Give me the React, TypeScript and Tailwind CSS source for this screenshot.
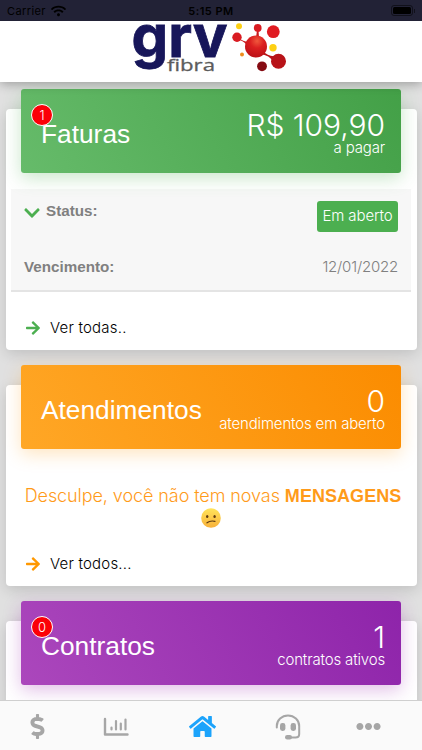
import type { ReactNode } from "react";
import {
  FaArrowRight,
  FaChevronDown,
  FaDollarSign,
  FaEllipsisH,
  FaHome,
  FaWifi,
} from "react-icons/fa";

function StatusBar() {
  return (
    <div className="flex h-[21px] items-center justify-between bg-[#222236] px-[7px] font-['Inter'] text-[11px] leading-3 text-black">
      <span className="flex w-[120px] items-center gap-[5px] tracking-[0.4px]">
        Carrier
        <FaWifi className="h-[12px] w-[15px]" />
      </span>
      <span className="font-semibold tracking-[0.5px]">5:15 PM</span>
      <span className="flex w-[120px] items-center justify-end gap-px">
        <span className="h-[11px] w-[22px] rounded-[3px] border border-black/50 p-px">
          <span className="block h-full rounded-[1.5px] bg-black" />
        </span>
        <span className="h-[4px] w-px bg-black/50" />
      </span>
    </div>
  );
}

function Logo() {
  return (
    <svg className="overflow-visible" width="160" height="56" viewBox="130 20 160 56">
      <defs>
        <radialGradient id="ball" cx="0.55" cy="0.25" r="0.8">
          <stop offset="0" stopColor="#f0583c" />
          <stop offset="0.4" stopColor="#db1f20" />
          <stop offset="1" stopColor="#b80f16" />
        </radialGradient>
      </defs>
      <text
        x="131.500"
        y="57"
        fontFamily="Inter"
        fontWeight="700"
        fontSize="58"
        stroke="#17165a"
        strokeWidth="0.8"
        textLength="96"
        lengthAdjust="spacingAndGlyphs"
        fill="#17165a"
      >
        grv
      </text>
      <text
        x="167"
        y="71"
        fontFamily="Open Sans"
        fontWeight="500"
        fontSize="16"
        stroke="#5b5b5b"
        strokeWidth="0.3"
        textLength="48"
        lengthAdjust="spacingAndGlyphs"
        fill="#5b5b5b"
      >
        fibra
      </text>
      <path d="M237 37 Q243 42 250 42 L248 46 Q243 40 236 39Z" fill="#c9191d" />
      <path d="M257 30 L258.500 30 L259 38 L256 38Z" fill="#c9191d" />
      <path d="M263 51 Q268 57 276 56 L273 62 Q270 55 260 54Z" fill="#b81318" />
      <circle cx="237" cy="37.300" r="4.700" fill="#d91c22" />
      <circle cx="257.700" cy="28" r="3.900" fill="#d91c22" />
      <circle cx="273.300" cy="31.700" r="6.400" fill="#e01b22" />
      <circle cx="256" cy="46.500" r="11" fill="url(#ball)" />
      <circle cx="278.500" cy="61.200" r="7.500" fill="#b81318" />
      <circle cx="262" cy="66.300" r="4.900" fill="#850b12" />
      <circle cx="239" cy="26.200" r="3" fill="#fdd013" />
      <circle cx="273" cy="47.800" r="3.700" fill="#fdd013" />
      <circle cx="242" cy="54.500" r="2" fill="#ee8d1d" />
    </svg>
  );
}

function Sad() {
  return (
    <svg className="mx-auto" width="20" height="20" viewBox="0 0 20 20">
      <defs>
        <linearGradient id="face" x1="0" y1="0" x2="0" y2="1">
          <stop offset="0" stopColor="#ffe45b" />
          <stop offset="1" stopColor="#f8b13a" />
        </linearGradient>
      </defs>
      <circle cx="10" cy="10" r="9.800" fill="url(#face)" />
      <ellipse cx="6.200" cy="8.600" rx="1.200" ry="1.500" fill="#5f3a12" />
      <ellipse cx="13.600" cy="8.600" rx="1.200" ry="1.500" fill="#5f3a12" />
      <path d="M6 14.800 Q9 12.300 14 13.300" fill="none" stroke="#5f3a12" strokeWidth="1.200" strokeLinecap="round" />
    </svg>
  );
}

function Chart() {
  return (
    <svg width="26" height="20" viewBox="0 0 26 20" fill="none" stroke="#a6a6a6" strokeLinecap="round">
      <path d="M2 2 V17.500 H24.500" strokeWidth="2.400" strokeLinejoin="round" />
      <path d="M8.500 10.500 V12.500 M13 4 V12.500 M17.800 6.500 V12.500 M22.500 2.500 V12.500" strokeWidth="2.200" />
    </svg>
  );
}

function Headset() {
  return (
    <svg width="26" height="26" viewBox="0 0 26 26" fill="#a6a6a6">
      <path
        d="M1.800 13.500 V12 A11.200 10.600 0 0 1 24.200 12 V20 Q24.200 23.500 20.500 23.500 H15"
        fill="none"
        stroke="#a6a6a6"
        strokeWidth="2"
        strokeLinecap="round"
      />
      <rect x="5" y="9" width="5.400" height="8" rx="2.400" />
      <rect x="15.600" y="9" width="5.400" height="8" rx="2.400" />
      <rect x="10" y="21" width="7" height="4.500" rx="2.200" />
    </svg>
  );
}

type CardProps = {
  title: string;
  value: string;
  label: string;
  color: string;
  badge?: string;
  className: string;
  children?: ReactNode;
};

function Card({ title, value, label, color, badge, className, children }: CardProps) {
  return (
    <section
      className={`mx-[5.5px] flow-root rounded-[4px] bg-white px-[5.5px] shadow-[0_4px_14px_rgba(0,0,0,0.14)] ${className}`}
    >
      <div className={`relative mx-[10px] -mt-5 flex h-[84px] justify-between rounded-[3px] pr-4 pl-5 ${color}`}>
        <h2 className="pt-[30px] text-[26.3px] leading-[30px]">{title}</h2>
        <div className="flex flex-col items-end pt-[22px] font-['Inter'] font-light">
          <span className="text-[30px] leading-[28px] tracking-[-0.05px]">{value}</span>
          <span className="text-[15px] leading-[17px] tracking-[-0.16px]">{label}</span>
        </div>
        {badge && (
          <span className="absolute top-[15px] left-[10px] flex size-[22px] items-center justify-center rounded-full border border-white bg-[#fb0007] font-['Inter'] text-[13px] leading-none font-light">
            {badge}
          </span>
        )}
      </div>
      {children}
    </section>
  );
}

function SeeAll({ text, color }: { text: string; color: string }) {
  return (
    <a className="flex h-5 items-center gap-[9px] pl-[14px] font-['Inter'] text-[15px] font-light tracking-[0.2px] text-black">
      <FaArrowRight className={`size-4 ${color}`} />
      <span>{text}</span>
    </a>
  );
}

export default function App() {
  return (
    <div className="flex h-[750px] w-[422px] flex-col overflow-hidden bg-[#e0e0e0] font-['Liberation_Sans',sans-serif] text-white">
      <header className="relative z-10 shrink-0 bg-white shadow-[0_2px_10px_rgba(0,0,0,0.3)]">
        <StatusBar />
        <div className="-mt-px flex h-[62px] pl-[130px]">
          <Logo />
        </div>
      </header>

      <main className="min-h-0 flex-1 overflow-hidden pt-[27px]">
        <Card
          title="Faturas"
          value="R$ 109,90"
          label="a pagar"
          badge="1"
          className="h-[241px]"
          color="bg-linear-[60deg,#66bb6a,#43a047] shadow-[0_5px_18px_rgba(76,175,80,0.3)]"
        >
          <div className="mt-4 h-[103px] border-b-2 border-[#e4e4e4] bg-[#f7f7f7] px-[13px] pt-3 text-[15.2px] text-[#808080]">
            <div className="flex h-[31px] justify-between">
              <div className="flex h-[21px] items-center gap-[4px] font-bold">
                <FaChevronDown className="mt-[2px] -ml-px mr-px size-[18px] text-[#4caf50]" />
                Status:
              </div>
              <span className="flex w-[81px] items-center justify-center rounded-[3px] bg-[#4caf50] font-['Inter'] text-[15px] font-light tracking-[-0.1px] text-white">
                Em aberto
              </span>
            </div>
            <div className="mt-[26px] flex h-[18px] items-center justify-between">
              <b>Vencimento:</b>
              <span className="font-['Inter'] text-[15px] font-light tracking-[-0.2px]">12/01/2022</span>
            </div>
          </div>
          <div className="mt-[26px]">
            <SeeAll text="Ver todas.." color="text-[#4caf50]" />
          </div>
        </Card>

        <Card
          title="Atendimentos"
          value="0"
          label="atendimentos em aberto"
          className="mt-[35px] h-[201px]"
          color="bg-linear-[60deg,#ffa726,#fb8c00] shadow-[0_5px_18px_rgba(255,152,0,0.25)]"
        >
          <p className="mt-[35px] pl-1 text-center font-['Inter'] text-[18px] leading-6 font-light tracking-[-0.08px] whitespace-nowrap text-[#ff9b1a]">
            Desculpe, você não tem novas{" "}
            <b className="font-['Liberation_Sans'] font-bold tracking-[0.05px]">MENSAGENS</b>
          </p>
          <Sad />
          <div className="mt-[26px]">
            <SeeAll text="Ver todos..." color="text-[#ff9800]" />
          </div>
        </Card>

        <Card
          title="Contratos"
          value="1"
          label="contratos ativos"
          badge="0"
          className="mt-[35px] h-[200px]"
          color="bg-linear-[60deg,#ab47bc,#8e24aa] shadow-[0_5px_18px_rgba(156,39,176,0.3)]"
        />
      </main>

      <nav className="relative z-10 grid h-[50px] shrink-0 grid-cols-[74px_84px_88px_84px_76px] items-center justify-items-center border-t border-[#cfcfcf] bg-[#fafafa] pt-[2px] text-[#a6a6a6]">
        <FaDollarSign className="size-[25px]" />
        <Chart />
        <FaHome className="size-[27px] text-[#1ca3fb]" />
        <Headset />
        <FaEllipsisH className="size-[25px]" />
      </nav>
    </div>
  );
}
